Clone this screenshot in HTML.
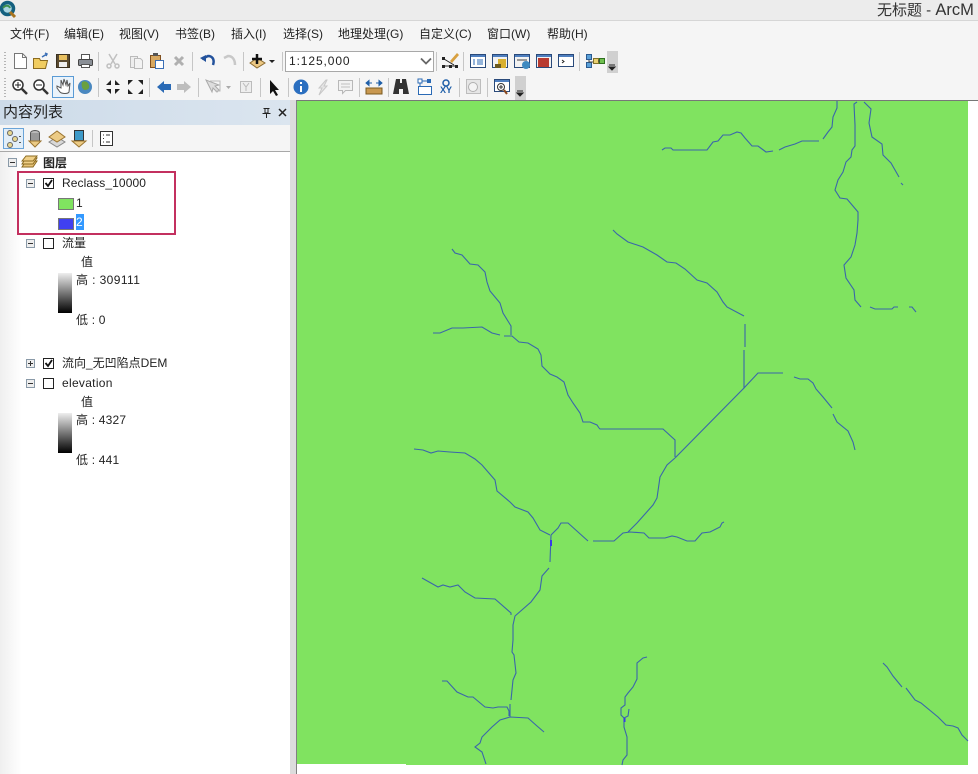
<!DOCTYPE html>
<html><head><meta charset="utf-8"><style>
html,body{margin:0;padding:0;background:#fff}
#p{position:relative;width:978px;height:774px;overflow:hidden;background:#fff;font:12px "Liberation Sans","Noto Sans CJK SC",sans-serif;color:#222}
.a{position:absolute;white-space:nowrap;line-height:16px}
svg{position:absolute;left:0;top:0}
</style></head><body><div id="p">
<div class="a" style="left:0;top:0;width:978px;height:20px;background:#ececec;border-bottom:1px solid #d6d6d6"></div>
<div class="a" style="left:0;top:21px;width:978px;height:79px;background:#f5f5f5"></div>
<div class="a" style="left:0;top:100px;width:290px;height:25px;background:linear-gradient(90deg,#cddbe9,#dbe5ef)"></div>
<div class="a" style="left:0;top:125px;width:290px;height:26px;background:#f5f5f5;border-bottom:1px solid #a8a8a8"></div>
<div class="a" style="left:0;top:152px;width:22px;height:622px;background:linear-gradient(90deg,#efefef,#fff)"></div>
<div class="a" style="left:290px;top:100px;width:6px;height:674px;background:#dcdcdc;border-right:1px solid #808080"></div>
<div class="a" style="left:297px;top:100px;width:681px;height:1px;background:#777"></div>
<div class="a" style="left:297px;top:101px;width:671px;height:663px;background:#80e360"></div>
<div class="a" style="left:406px;top:764px;width:562px;height:1px;background:#80e360"></div>

<div class="a" style="left:877px;top:1px;font-size:15px;line-height:18px;color:#333">无标题 - <span style="font-size:16.500px">ArcM</span></div>
<div class="a" style="left:10px;top:26px">文件(F)</div>
<div class="a" style="left:64px;top:26px">编辑(E)</div>
<div class="a" style="left:119px;top:26px">视图(V)</div>
<div class="a" style="left:175px;top:26px">书签(B)</div>
<div class="a" style="left:231px;top:26px">插入(I)</div>
<div class="a" style="left:283px;top:26px">选择(S)</div>
<div class="a" style="left:338px;top:26px">地理处理(G)</div>
<div class="a" style="left:419px;top:26px">自定义(C)</div>
<div class="a" style="left:487px;top:26px">窗口(W)</div>
<div class="a" style="left:547px;top:26px">帮助(H)</div>

<div class="a" style="left:285px;top:51px;width:147px;height:19px;background:#fff;border:1px solid #a8a8a8;line-height:18px;text-indent:3px;letter-spacing:.9px;font-size:12px">1:125,000</div>

<div class="a" style="left:3px;top:104px;font-size:15px;line-height:18px;color:#222">内容列表</div>
<div class="a" style="left:43px;top:155px;font-weight:bold">图层</div>
<div class="a" style="left:62px;top:175px;letter-spacing:.1px">Reclass_10000</div>
<div class="a" style="left:76px;top:195px">1</div>
<div class="a" style="left:76px;top:214px;width:8px;background:#3399ff;color:#fff">2</div>
<div class="a" style="left:62px;top:235px">流量</div>
<div class="a" style="left:81px;top:254px">值</div>
<div class="a" style="left:76px;top:272px;letter-spacing:.4px">高 : 309111</div>
<div class="a" style="left:76px;top:312px;letter-spacing:.2px">低 : 0</div>
<div class="a" style="left:62px;top:355px">流向_无凹陷点DEM</div>
<div class="a" style="left:62px;top:375px;letter-spacing:.3px">elevation</div>
<div class="a" style="left:81px;top:394px">值</div>
<div class="a" style="left:76px;top:412px;letter-spacing:.2px">高 : 4327</div>
<div class="a" style="left:76px;top:452px;letter-spacing:.2px">低 : 441</div>

<div class="a" style="left:58px;top:273px;width:14px;height:40px;background:linear-gradient(#eee,#000)"></div>
<div class="a" style="left:58px;top:413px;width:14px;height:40px;background:linear-gradient(#eee,#000)"></div>
<div class="a" style="left:58px;top:198px;width:14px;height:10px;background:#80e360;border:1px solid #777"></div>
<div class="a" style="left:58px;top:218px;width:14px;height:10px;background:#4040f0;border:1px solid #777"></div>
<div class="a" style="left:17px;top:171px;width:155px;height:60px;border:2.500px solid #c3305f"></div>

<svg width="978" height="774" viewBox="0 0 978 774" fill="none">
<!-- logo -->
<circle cx="7.500" cy="8.500" r="6" stroke="#14607f" stroke-width="3.500" fill="#a8d4e0"/><path d="M10 12l5 5" stroke="#a8741f" stroke-width="3"/><path d="M3 8c2-3 6-3 7 0" stroke="#3f8f4f" stroke-width="2"/>

<!-- toolbar grippers -->
<g stroke="#b5b5b5" stroke-dasharray="1 2" stroke-width="2"><path d="M5 52v19M5 78v19"/></g>
<!-- separators -->
<g stroke="#c6c6c6"><path d="M98.500 52v19M192.500 52v19M243.500 52v19M282.500 52v19M436.500 52v19M463.500 52v19M579.500 52v19M98.500 78v19M149.500 78v19M198.500 78v19M260.500 78v19M288.500 78v19M359.500 78v19M388.500 78v19M459.500 78v19M487.500 78v19M92.500 130v17"/></g>

<!-- row 1 -->
<path d="M14.500 53.500h8l4 4v11h-12z" fill="#fff" stroke="#777"/><path d="M22.500 53.500v4h4" stroke="#777"/>
<path d="M33.500 58.500h6l1 2h7l-2 8h-12z" fill="#f0cc60" stroke="#8a6a20"/><path d="M42 57l5-3m-2-1l2 1-1 2" stroke="#3b6fb5" stroke-width="1.500"/>
<rect x="56.500" y="54.500" width="13" height="13" fill="#5a4a30" stroke="#3a3020"/><rect x="59" y="55" width="8" height="5" fill="#e8c060"/><rect x="59" y="62" width="8" height="5" fill="#eee"/>
<rect x="81.500" y="54.500" width="8" height="5" fill="#fff" stroke="#555"/><rect x="78.500" y="59.500" width="14" height="6" rx="1" fill="#8a8f96" stroke="#444"/><rect x="81.500" y="64.500" width="8" height="3" fill="#fff" stroke="#555"/>
<g stroke="#c0c0c0" stroke-width="1.500"><path d="M109 54l6 10M117 54l-6 10"/><circle cx="109" cy="66" r="2"/><circle cx="117" cy="66" r="2"/></g>
<path d="M130.500 56.500h7v11h-7z" fill="#eee" stroke="#bbb"/><path d="M134.500 58.500h6l2 2v8h-8z" fill="#f3f3f3" stroke="#bbb"/>
<rect x="150.500" y="55.500" width="10" height="12" fill="#d8a860" stroke="#80501f"/><rect x="153" y="53" width="5" height="3" fill="#555"/><rect x="155.500" y="60.500" width="8" height="8" fill="#fff" stroke="#3b6fb5"/>
<path d="M175 57l8 8M183 57l-8 8" stroke="#b0b0b0" stroke-width="3"/>
<path d="M202 59l6-3c4 0 7 3 5 9" stroke="#23529c" stroke-width="2.500"/><path d="M200 58l6-3v7z" fill="#23529c"/>
<path d="M235 65c0-6-3-9-7-9l-4 2" stroke="#c8c8c8" stroke-width="2.500"/>
<path d="M250 63l7-5 8 5-8 5z" fill="#ecc884" stroke="#8a6a30"/><path d="M257 54v10M252 59h10" stroke="#111" stroke-width="2.500"/>
<path d="M269 60h6l-3 3z" fill="#222"/>
<path d="M421 58.500l5 5 5-5" stroke="#666" stroke-width="1.800"/>
<g stroke="#222"><path d="M444 59l10 6M444 66h13"/></g><g fill="#222"><rect x="442" y="57" width="3" height="3"/><rect x="442" y="65" width="3" height="3"/><rect x="449" y="65" width="3" height="3"/><rect x="455" y="65" width="3" height="3"/></g><path d="M450 61l7-8 2 2-7 8z" fill="#d8a040"/>
<rect x="470.500" y="54.500" width="15" height="13" fill="#fff" stroke="#2a4a7a"/><rect x="471" y="55" width="14" height="2" fill="#4f7fbf"/><path d="M473 60h2M473 62h2M473 64h2M477 60h6M477 62h6M477 64h6" stroke="#2a6ab5"/>
<rect x="492.500" y="54.500" width="15" height="13" fill="#f2f2f2" stroke="#2a4a7a"/><rect x="493" y="55" width="14" height="2" fill="#4f7fbf"/><rect x="498" y="59" width="8" height="9" fill="#d8b030"/><rect x="495" y="64" width="6" height="4" fill="#6b5a20"/>
<rect x="514.500" y="54.500" width="15" height="13" fill="#f2f2f2" stroke="#2a4a7a"/><rect x="515" y="55" width="14" height="2" fill="#4f7fbf"/><path d="M517 60h10" stroke="#999" stroke-width="2"/><circle cx="526" cy="65" r="4" fill="#3f8ac0"/>
<rect x="536.500" y="54.500" width="15" height="13" fill="#f2f2f2" stroke="#2a4a7a"/><rect x="537" y="55" width="14" height="2" fill="#4f7fbf"/><rect x="538" y="58" width="11" height="9" fill="#b83a30"/>
<rect x="558.500" y="54.500" width="15" height="12" fill="#fff" stroke="#2a4a7a"/><rect x="559" y="55" width="14" height="2" fill="#4f7fbf"/><path d="M562 60l2 1.500-2 1.500" stroke="#222"/>
<rect x="586.500" y="54.500" width="5" height="5" fill="#5aa0d8" stroke="#2a5a90"/><rect x="586.500" y="62.500" width="5" height="5" fill="#5aa0d8" stroke="#2a5a90"/><rect x="593.500" y="58.500" width="5" height="5" fill="#e8d070" stroke="#80702a"/><rect x="599.500" y="58.500" width="5" height="5" fill="#70c050" stroke="#307020"/><path d="M589 60v2h4M598 61h2" stroke="#444"/>
<rect x="607" y="51" width="11" height="22" fill="#d0d0d0"/><path d="M609 65h6M609 67h6l-3 3z" stroke="#222" fill="#222"/>

<!-- row 2 -->
<rect x="52.500" y="76.500" width="21" height="21" fill="#eaf3fb" stroke="#5a9bd5"/>
<g stroke="#333" stroke-width="1.500" fill="#fff"><circle cx="18" cy="85" r="5"/><circle cx="39" cy="85" r="5"/></g><path d="M22 89l5 5M43 89l5 5" stroke="#333" stroke-width="2.500"/><path d="M15 85h6M18 82v6M36 85h6" stroke="#222"/>
<path d="M57 88l3 4c2 2 8 2 9 0l1-9-2 3-1-6-1 5-2-6-1 6-2-5 0 8-4-2z" fill="#fff" stroke="#555"/>
<circle cx="85" cy="87" r="7" fill="#4a88c0"/><path d="M82 82c3-2 6 0 7 3s-1 5-4 5-4-5-3-8z" fill="#6aa040"/>
<g fill="#222"><path d="M111 85v-5l-5 5zM115 85v-5l5 5zM111 89v5l-5-5zM115 89v5l5-5z"/><path d="M128 80h5l-5 5zM143 80h-5l5 5zM128 94h5l-5-5zM143 94h-5l5-5z"/></g>
<path d="M157 87l7-6v3h7v6h-7v3z" fill="#2a6ab5"/>
<path d="M191 87l-7-6v3h-7v6h7v3z" fill="#bdbdbd"/>
<path d="M206 80l6 12 1-4 4 4 2-2-4-4 4-1z" fill="#ddd" stroke="#aaa"/><path d="M210 81h10v10h-5" stroke="#bbb"/><path d="M226 86h5l-2.500 3z" fill="#aaa"/>
<rect x="240.500" y="81.500" width="11" height="11" fill="#eee" stroke="#bbb"/><path d="M243 83l3 4 3-4M246 87v4" stroke="#bbb"/>
<path d="M270 80v14l3-3 3 5 2-1-3-5h4z" fill="#111"/>
<circle cx="301" cy="87" r="7.500" fill="#2b6fc0"/><path d="M301 82v2M301 86v6" stroke="#fff" stroke-width="2"/>
<path d="M326 80l-7 8h3l-3 7 8-9h-3l3-6z" fill="#e6e6e6" stroke="#c8c8c8"/>
<path d="M338.500 80.500h14v10h-7l-3 3v-3h-4z" fill="#f2f2f2" stroke="#b8b8b8"/><path d="M341 84h9M341 87h9" stroke="#c0c0c0"/>
<path d="M366 83h6M376 83h6M366 83l3-2.500v5zM382 83l-3-2.500v5z" stroke="#1f5fa8" fill="#1f5fa8"/><rect x="366" y="88" width="16" height="6" fill="#c89850" stroke="#7a5a20"/>
<path d="M396 79h4v4h2v-4h4l3 15h-6v-5h-4v5h-6z" fill="#333"/>
<rect x="418.500" y="86.500" width="13" height="8" fill="#fff" stroke="#2a6ab5"/><rect x="418" y="79" width="4" height="4" fill="#fff" stroke="#2a6ab5"/><rect x="427" y="79" width="4" height="4" fill="#2a6ab5"/><path d="M422 81h5M420 83v4" stroke="#2a6ab5"/>
<circle cx="446" cy="83" r="3" stroke="#1f5fa8" stroke-width="1.500"/>
<rect x="466.500" y="79.500" width="14" height="14" fill="#e6e6e6" stroke="#bdbdbd"/><circle cx="473" cy="87" r="4.500" stroke="#b0b0b0" fill="#f4f4f4"/>
<rect x="494.500" y="79.500" width="15" height="12" fill="#fff" stroke="#2a4a7a"/><rect x="495" y="80" width="14" height="2" fill="#4f7fbf"/><circle cx="501" cy="87" r="3.500" stroke="#333" fill="#fff"/><path d="M504 90l3 4" stroke="#8a4a20" stroke-width="2"/><path d="M499 87h4M501 85v4" stroke="#333"/>
<rect x="515" y="76" width="11" height="24" fill="#d0d0d0"/><path d="M517 91h6M517 93h6l-3 3z" stroke="#222" fill="#222"/>

<!-- panel head -->
<path d="M263.500 108.500h6M265 108v5h3v-5M262.500 113.500h8M266.500 114v4" stroke="#222"/>
<path d="M279 109l7 7M286 109l-7 7" stroke="#222" stroke-width="1.500"/>

<!-- toc toolbar -->
<rect x="3.500" y="128.500" width="20" height="20" fill="#e2eef8" stroke="#6aa4d8"/>
<circle cx="10" cy="133" r="2.500" fill="#e8d890" stroke="#666"/><circle cx="15" cy="139" r="2.500" fill="#e8d890" stroke="#666"/><circle cx="10" cy="145" r="2.500" fill="#e8d890" stroke="#666"/><path d="M20 136v1M20 142v1" stroke="#222" stroke-width="1.500"/>
<ellipse cx="35" cy="133" rx="4.500" ry="2.500" fill="#bbb" stroke="#555"/><path d="M30.500 133v8h9v-8" fill="#999" stroke="#555"/><path d="M29 141h12l-6 6z" fill="#eccb85" stroke="#9a7430"/>
<path d="M49 142l8-5 8 5-8 5z" fill="#d8d8d8" stroke="#888"/><path d="M49 137l8-6 8 6-8 5z" fill="#eccb85" stroke="#9a7430"/>
<rect x="74.500" y="130.500" width="9" height="10" fill="#3f9ac8" stroke="#333"/><path d="M72 141h14l-7 6z" fill="#eccb85" stroke="#9a7430"/>
<rect x="100.500" y="131.500" width="12" height="14" fill="#fff" stroke="#333"/><path d="M103 135h1M103 138.500h1M103 142h1M106 135h4M106 142h4" stroke="#333"/>

<!-- tree -->
<rect x="8.500" y="158.500" width="8" height="8" fill="#eee" stroke="#8a9aa8"/><path d="M10 162.500h5" stroke="#333"/>
<path d="M22 167l4-6h11l-4 6z" fill="#e8c478" stroke="#8a6a20"/><path d="M22 164l4-6h11l-4 6z" fill="#f0d088" stroke="#8a6a20"/><path d="M22 161l4-5h11l-4 5z" fill="#f0d088" stroke="#8a6a20"/>
<rect x="26.500" y="179.500" width="8" height="8" fill="#eee" stroke="#8a9aa8"/><path d="M28 183.500h5" stroke="#333"/>
<rect x="26.500" y="239.500" width="8" height="8" fill="#eee" stroke="#8a9aa8"/><path d="M28 243.500h5" stroke="#333"/>
<rect x="26.500" y="359.500" width="8" height="8" fill="#eee" stroke="#8a9aa8"/><path d="M28 363.500h5M30.500 361v5" stroke="#333"/>
<rect x="26.500" y="379.500" width="8" height="8" fill="#eee" stroke="#8a9aa8"/><path d="M28 383.500h5" stroke="#333"/>
<g fill="#fff" stroke="#222"><rect x="43.500" y="178.500" width="10" height="10"/><rect x="43.500" y="238.500" width="10" height="10"/><rect x="43.500" y="358.500" width="10" height="10"/><rect x="43.500" y="378.500" width="10" height="10"/></g>
<path d="M45.500 183l2.500 3 4-6M45.500 363l2.500 3 4-6" stroke="#111" stroke-width="1.800"/>

<!-- rivers -->
<g stroke="#3a66aa" stroke-width="1.100">
<polyline points="662,150 665,148 671,148 673,150 707,150 713,142 718,141 723,135 730,135 737,132 741,133 745,138 752,146 758,146 766,152 773,151"/>
<polyline points="779,150 785,147 795,144 802,141 819,141"/>
<polyline points="823,139 828,132 832,127 833,117 837,108 837,101"/>
<polyline points="857,102 854,104 855,125 855,146 852,150 851,157 846,162 843,172 838,180 835,190 840,198 847,199 858,212 858,220 857,233 855,245 851,257 844,265 846,278 854,290 855,300 861,307"/>
<polyline points="870,307 875,309 892,309 894,307 898,307"/>
<polyline points="909,307 912,307 916,312"/>
<polyline points="864,102 871,109 869,123 872,137 882,144 883,155 891,163 899,177"/>
<polyline points="901,183 903,185"/>
<polyline points="613,230 617,234 628,242 643,247 657,255 667,262 676,263 685,269 697,280 707,283 717,292 723,302 727,307 744,316"/>
<polyline points="745,324 745,347"/>
<polyline points="744,350 744,388 758,373 783,373"/>
<polyline points="794,377 800,379 808,379 813,383 816,389 823,397 832,408"/>
<polyline points="833,414 837,422 848,431 853,442 855,450"/>
<polyline points="744,388 675,458"/>
<polyline points="599,428 600,429 663,429 675,440 675,457"/>
<polyline points="452,249 455,253 462,255 470,264 478,265 485,272 487,282 490,291 500,303 503,313 511,326 511,335"/>
<polyline points="433,333 440,333 452,328 463,328 482,327 492,333 500,335"/>
<polyline points="504,336 512,336 519,342 528,343 538,349 541,355 542,366 550,374 557,377 564,382 568,395 573,403 580,413 583,422 590,422 597,425 599,428"/>
<polyline points="414,449 423,450 431,453 438,451 450,452 465,453 475,459 482,465 495,480 497,491 510,502 515,507 528,512 533,518 540,530 550,535"/>
<polyline points="551,535 558,528 561,523 568,523 588,541"/>
<polyline points="593,541 614,541 623,533 630,532 644,533 649,538 665,538 672,536 677,537 687,541 695,541 702,533 710,532 720,527 722,523 724,522"/>
<polyline points="628,532 637,523 653,505 657,498 660,477 667,465 675,458"/>
<polyline points="551,535 550,562"/>
<polyline points="549,568 542,576 540,590 531,602 515,616 513,625 513,640 512,652 514,655 516,673 513,680 511,700"/>
<polyline points="422,578 438,587 443,585 450,587 458,585 465,592 475,598 495,599 511,613 511,615"/>
<polyline points="510,704 510,717"/>
<polyline points="442,681 447,681 457,692 468,697 473,697 485,707 493,708 498,707 507,707 509,711 509,716"/>
<polyline points="544,732 537,726 528,718 510,717 500,720 492,727 482,737 480,743 475,747 482,752 486,764"/>
<polyline points="647,657 643,658 637,663 637,679 633,687 628,693 625,697 625,705 621,708 621,715 624,718 624,727 627,737 627,755 623,760 622,765"/>
<polyline points="629,709 628,716 624,718"/>
<polyline points="883,663 887,667 893,676 902,687"/>
<polyline points="906,688 915,700 921,703 938,717 946,725 953,726 958,728 962,735 968,741"/>
</g>
<path d="M551 540v6M624.500 718v4" stroke="#3a3ae8" stroke-width="2"/>
</svg>
<div class="a" style="left:440px;top:85px;width:12px;text-align:center;font-size:9px;font-weight:bold;line-height:10px;color:#1f5fa8">XY</div>
</div></body></html>
